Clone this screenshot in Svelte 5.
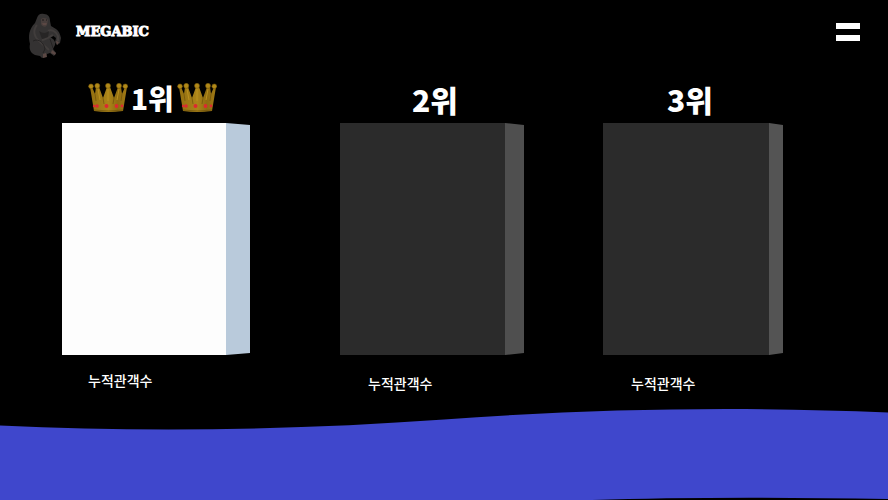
<script>
  const ranks = [
    { place: 1, label: '1위', kind: 'first' },
    { place: 2, label: '2위', kind: 'second' },
    { place: 3, label: '3위', kind: 'third' }
  ];
</script>

{#snippet crown()}
  <svg class="crown" viewBox="0 0 40 30" aria-hidden="true">
    <defs>
      <linearGradient id="gold" x1="0" x2="1">
        <stop offset="0" stop-color="#94700f" />
        <stop offset=".3" stop-color="#a07b16" />
        <stop offset=".5" stop-color="#ab8419" />
        <stop offset=".75" stop-color="#8f6c10" />
        <stop offset="1" stop-color="#a07915" />
      </linearGradient>
    </defs>
    <path fill="url(#gold)" d="M2 4 4 4 7 11 8 4 11 4 15 15 19 4 22 4 26 15 30 4 33 4 34 11 37 4 39 4 35 28Q20 30 6 28Z" />
    <path fill="none" stroke="#6f520b" stroke-width=".7" d="M6 27Q20 29 35 27M15 15 16 21M26 15 25 21M7 11 8 18M34 11 33 18" />
    <path fill="none" stroke="#bb911f" d="M10 6 12 17M20 5V18M31 6 29 17" />
    <g fill="#b18919" stroke="#735409" stroke-width=".5">
      <circle cx="3" cy="3.3" r="2.4" /><circle cx="9.3" cy="2.8" r="2.5" />
      <circle cx="20" cy="2.8" r="2.5" /><circle cx="31" cy="2.8" r="2.5" />
      <circle cx="37.3" cy="3.3" r="2.4" />
    </g>
    <g fill="#dc2930">
      <circle cx="6" cy="23" r="1.2" /><circle cx="9" cy="23" r="1.8" />
      <circle cx="18.5" cy="23" r="2" /><circle cx="28.5" cy="23" r="1.9" />
      <circle cx="34" cy="23" r="1.4" />
    </g>
  </svg>
{/snippet}

<div class="page">
  <header>
    <a class="brand" href="/">
      <svg class="ape" viewBox="0 0 34 46" aria-hidden="true">
        <path fill="#343232" d="M9 5C10 1 13 0 16 1c4 0 6 3 6 7l1 5 5 3c3 2 4 5 5 9l-1 5-3 2-2-3 1-4-4-3-2 2c4 2 6 5 5 8l-2 4 3 4-2 3-4-3-3 1-1 3-4 1-2-2-5-1c-5-2-6-7-5-11C0 23 1 16 7 10Z" />
        <path fill="none" stroke="#413d3c" stroke-width="2" d="M9 12C4 18 7 24 10 27l11 10M20 18c3-2 8 0 10 5v5M14 27c4 0 7-3 11-5" />
        <path fill="#272525" d="M11 18c4 3 8 2 10 0l-1 6-6 2Z" />
        <path fill="none" stroke="#242222" stroke-width="1" d="M5 28c6-3 11 2 12 8l-2 4M22 26l3 9" />
        <path fill="#483e3c" d="M13 6c2-2 6-1 7 1l-1 5c-1 3-5 2-6-1Z" />
        <path fill="#5b4844" d="M14 10h5l-1 2h-3zM15 41l3-1 1 4-4 1zM24 37l4 3-1 2-4-2zM28 28l3 1-2 3z" />
        <path stroke="#1a1919" d="M14 7h2M18 7h1" />
      </svg>
      <span>MEGABIC</span>
    </a>
    <button class="menu" aria-label="메뉴"><i></i><i></i></button>
  </header>

  <main>
    {#each ranks as rank (rank.place)}
      <article class={rank.kind}>
        <h2>
          {#if rank.place === 1}{@render crown()}{/if}
          <span>{rank.label}</span>
          {#if rank.place === 1}{@render crown()}{/if}
        </h2>
        <div class="box"><div class="front"></div><div class="side"></div></div>
        <p>누적관객수</p>
      </article>
    {/each}
  </main>

  <svg class="wave" viewBox="0 0 888 92" preserveAspectRatio="none" aria-hidden="true">
    <path fill="#3f47cc" d="M0 17.5C148 24.5 296 22 444 11.5C592 .5 740-2 888 4.5V91Q715 88 592 92H0Z" />
  </svg>
</div>

<style>
  :global(body) {
    margin: 0;
    background: #000;
  }

  .page {
    display: flex;
    flex-direction: column;
    min-height: 100vh;
    background: #000;
    color: #fff;
    font-family: 'Noto Sans CJK KR', sans-serif;
  }

  header {
    display: flex;
    align-items: center;
    justify-content: space-between;
    height: 64px;
    padding: 0 28px;
  }

  .brand {
    display: flex;
    align-items: center;
    gap: 14px;
    color: inherit;
    font: 700 13px/20px 'DejaVu Serif', serif;
    text-decoration: none;
    -webkit-text-stroke: 1px #fff;
  }

  .ape {
    width: 34px;
    height: 46px;
    margin-top: 8px;
  }

  .menu {
    display: flex;
    flex-direction: column;
    gap: 6px;
    width: 24px;
    padding: 0;
    border: 0;
    background: none;
  }

  .menu i {
    height: 6px;
    background: #fff;
  }

  main {
    display: grid;
    grid-template-columns: 278fr 263fr 180fr;
    padding: 16px 105px 0 62px;
  }

  h2 {
    display: flex;
    align-items: flex-start;
    height: 43px;
    margin: 0;
    font-size: 30px;
    font-weight: 900;
    line-height: 38px;
    white-space: nowrap;
  }

  .first h2 {
    gap: 3px;
    padding-left: 26px;
    font-size: 28px;
    line-height: 36px;
  }

  .second h2 {
    padding-left: 72px;
  }

  .third h2 {
    padding-left: 64px;
  }

  .crown {
    width: 40px;
    height: 30px;
    margin-top: 3px;
  }

  .box {
    display: flex;
    height: 232px;
  }

  .front {
    width: 165px;
    background: #2b2b2b;
  }

  .side {
    width: 19px;
    background: #4f4f4f;
    clip-path: polygon(0 0, 100% 2px, 100% calc(100% - 2px), 0 100%);
  }

  .first .front {
    width: 164px;
    background: #fdfdfd;
  }

  .first .side {
    width: 24px;
    background: #b9cadb;
  }

  .third .front {
    width: 166px;
  }

  .third .side {
    width: 14px;
    background: #545454;
  }

  p {
    margin: 0;
    padding: 18px 0 15px 28px;
    font-size: 14px;
    font-weight: 500;
    line-height: 20px;
  }

  .first p {
    padding-top: 15px;
    padding-left: 26px;
  }

  .wave {
    display: block;
    width: 100%;
    height: 92px;
  }
</style>
